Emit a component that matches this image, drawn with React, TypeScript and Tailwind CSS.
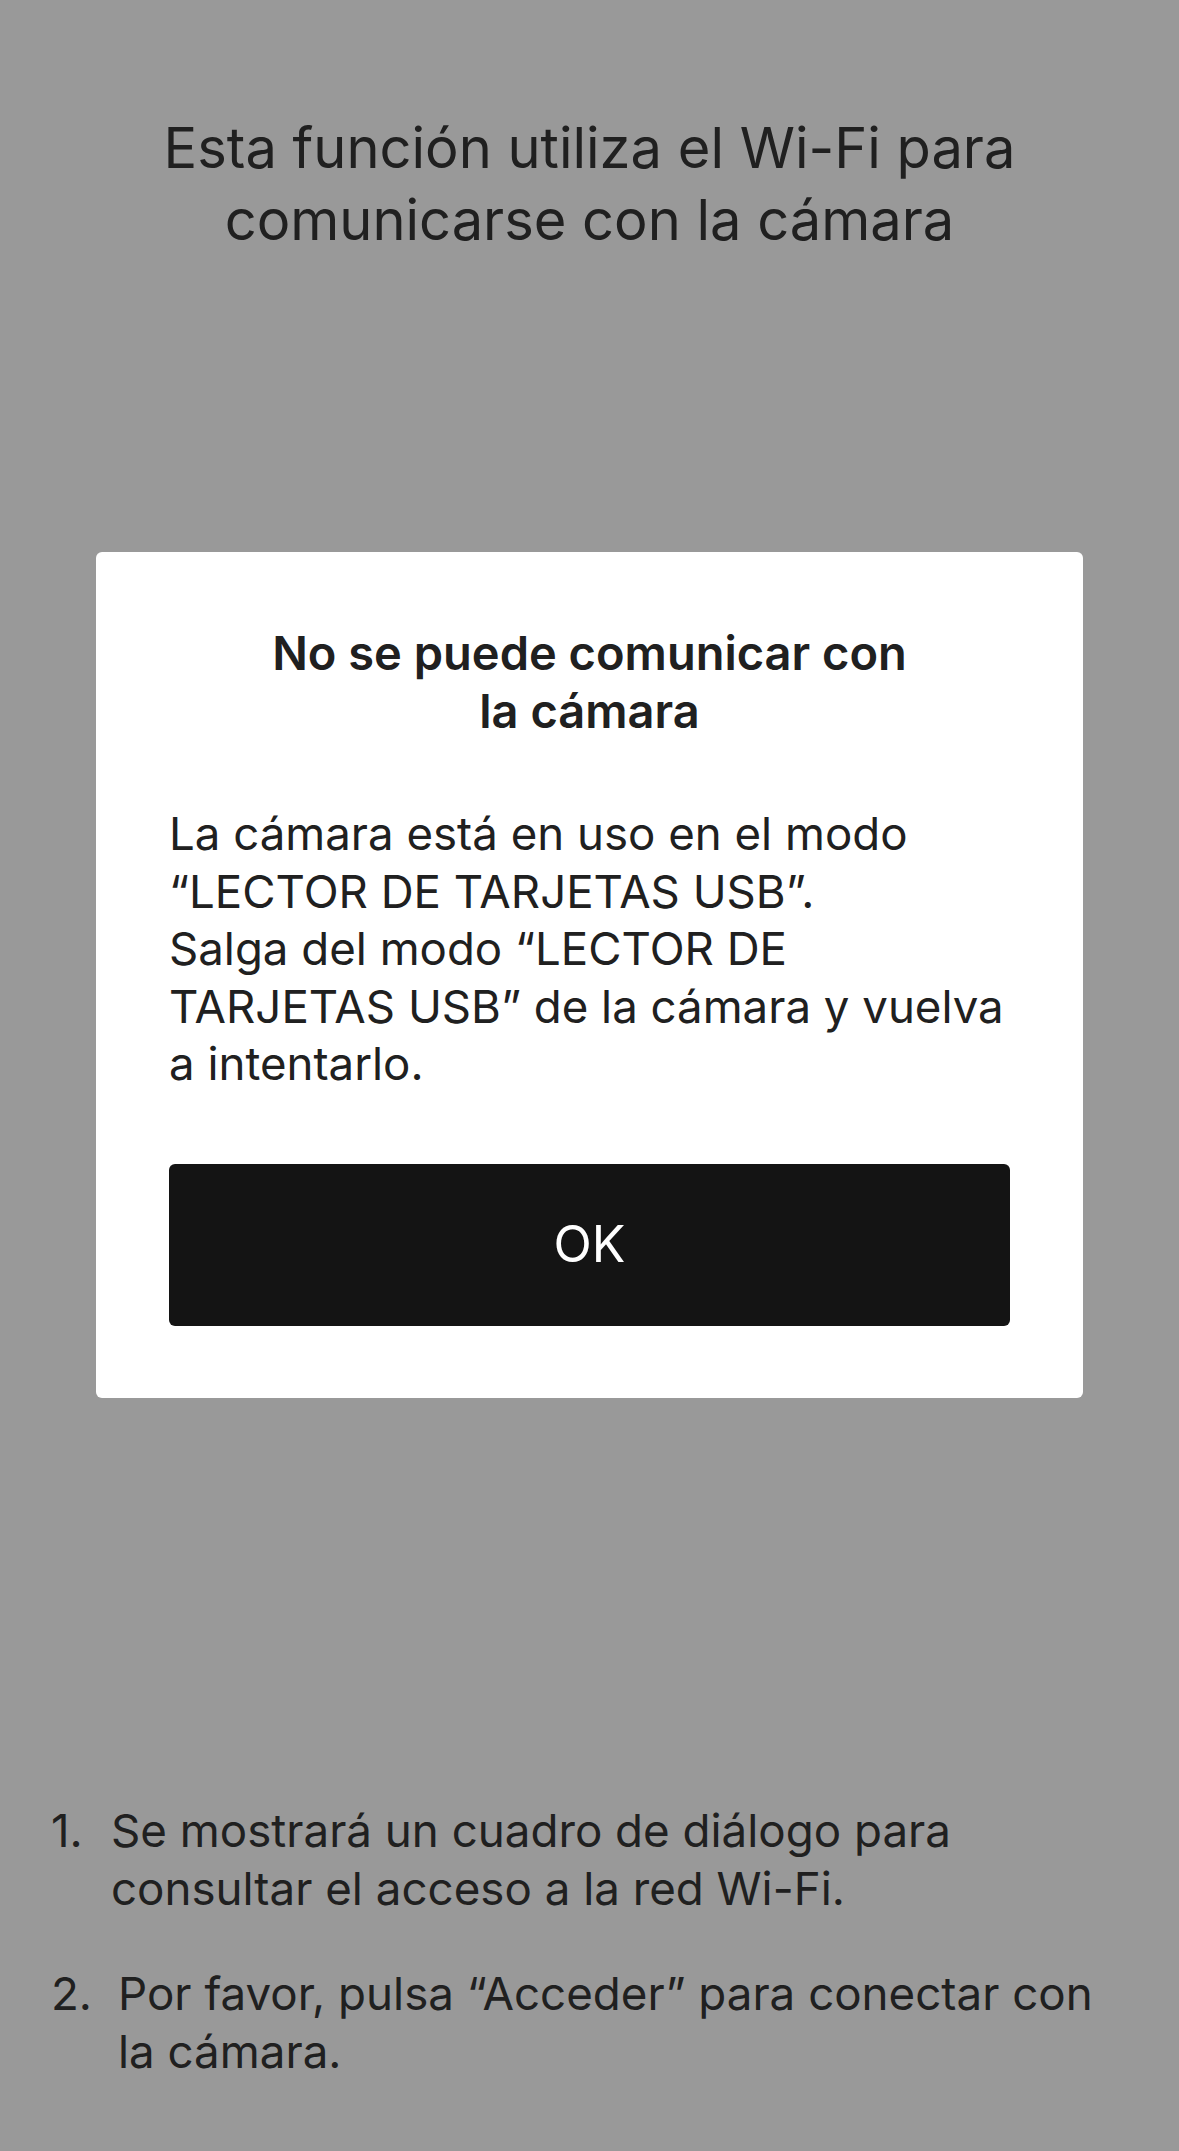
import React from 'react';

export default function App() {
  return (
    <div
      className="min-h-[2151px] w-full bg-[#999999] text-[#202020]"
      style={{ fontFamily: 'Inter, "Noto Sans", sans-serif' }}
    >
      <h1 className="pt-[112px] text-center text-[56px] leading-[72px] font-normal">
        Esta función utiliza el Wi-Fi para
        <br />
        comunicarse con la cámara
      </h1>

      <div className="mx-[96px] mt-[296px] rounded-[6px] bg-white px-[73px] pt-[72px] pb-[72px]">
        <h2 className="text-center text-[47px] leading-[58px] font-semibold">
          No se puede comunicar con
          <br />
          la cámara
        </h2>
        <p className="mt-[65px] text-[45.6px] leading-[57.5px]">
          La cámara está en uso en el modo
          <br />
          “LECTOR DE TARJETAS USB”.
          <br />
          Salga del modo “LECTOR DE
          <br />
          TARJETAS USB” de la cámara y vuelva
          <br />
          a intentarlo.
        </p>
        <button className="mt-[71px] flex h-[162px] w-full items-center justify-center rounded-[6px] bg-[#141414] text-[50px] text-white">
          OK
        </button>
      </div>

      <ol className="mt-[404px] flex flex-col gap-[47px] pl-[51px] pr-[20px] text-[45.7px] leading-[58px]">
        <li className="flex">
          <span className="w-[60px] shrink-0">1.</span>
          <span className="whitespace-nowrap">
            Se mostrará un cuadro de diálogo para
            <br />
            consultar el acceso a la red Wi-Fi.
          </span>
        </li>
        <li className="flex">
          <span className="w-[67px] shrink-0">2.</span>
          <span className="whitespace-nowrap">
            Por favor, pulsa “Acceder” para conectar con
            <br />
            la cámara.
          </span>
        </li>
      </ol>
    </div>
  );
}
